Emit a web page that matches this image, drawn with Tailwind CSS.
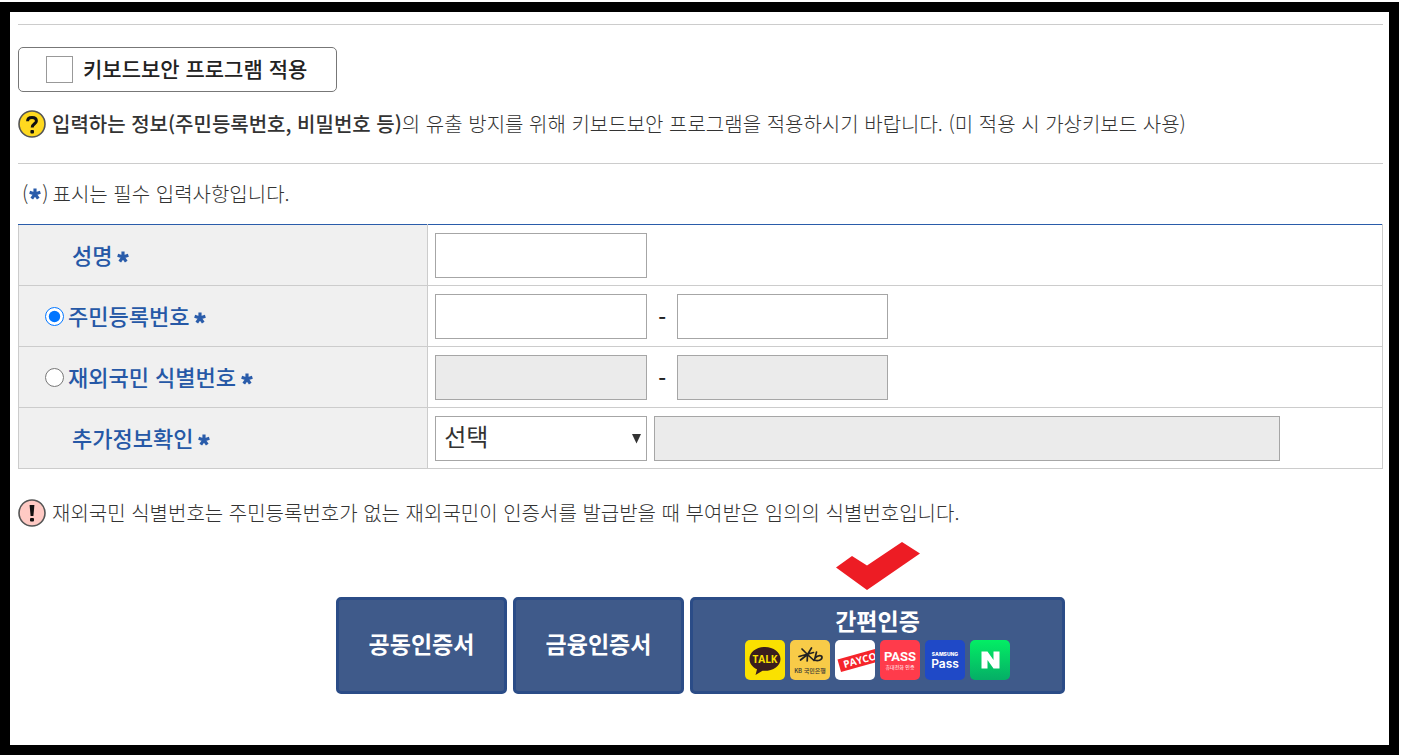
<!DOCTYPE html>
<html lang="ko">
<head>
  <meta charset="UTF-8">
  <meta name="viewport" content="width=device-width, initial-scale=1.0">
  <title>본인확인</title>
  <script src="https://cdn.jsdelivr.net/npm/@tailwindcss/browser@4"></script>
</head>
<body class="bg-white font-['Noto_Sans_CJK_KR',sans-serif] text-[#333]">
  <!-- asterisk used by every required field -->
  <svg class="hidden">
    <symbol id="required" viewBox="0 0 12 12">
      <path d="M6 6V1.2M6 6L1.4 4.6M6 6L10.6 4.6M6 6L3.2 10M6 6L8.8 10" stroke="#2a5caa" stroke-width="2.7" fill="none"/>
    </symbol>
  </svg>

  <main class="mt-0.5 mr-0.5 min-h-[calc(100vh-2px)] border-10 border-black pt-3 pr-1.5 pb-12 pl-2">
    <section class="border-y border-[#ccc] pt-[22px] pb-[23px]">
      <label class="flex h-[45px] w-[319px] items-center gap-2.5 rounded-[5px] border border-[#777] pl-[27px] text-[21px] font-medium text-[#222]">
        <input type="checkbox" class="size-[27px] appearance-none border border-[#999] bg-white checked:bg-[#2a5caa]">
        <span class="pb-0.5">키보드보안 프로그램 적용</span>
      </label>
      <p class="mt-4 flex h-8 items-center gap-1.5 text-[20px] font-light">
        <svg class="size-7 shrink-0" viewBox="0 0 28 28">
          <circle cx="14" cy="14" r="13" fill="#ffd91f" stroke="#555" stroke-width="1.6"/>
          <path d="M9.6 11.2C9.6 8.6 11.4 7.4 14 7.4S18.4 8.8 18.4 11C18.4 13.8 14.2 13.8 14.2 17.4" stroke="#111" stroke-width="3" fill="none"/>
          <rect x="12.4" y="20" width="3.6" height="3.6" rx="1" fill="#111"/>
        </svg>
        <span><strong class="font-medium">입력하는 정보(주민등록번호, 비밀번호 등)</strong>의 유출 방지를 위해 키보드보안 프로그램을 적용하시기 바랍니다. (미 적용 시 가상키보드 사용)</span>
      </p>
    </section>

    <p class="flex h-[60px] items-center pl-1 text-[20px] font-light">
      (<svg class="size-3.5"><use href="#required"/></svg>) <span class="pl-1">표시는 필수 입력사항입니다.</span>
    </p>

    <table class="w-full table-fixed border-collapse border border-t-[#2a5caa] border-[#ccc]">
      <tbody>
        <tr class="h-[61px]">
          <th scope="row" class="w-[30%] border-r border-[#ccc] bg-[#f0f0f0] pb-0.5 pl-[53px] text-left text-[22px] font-medium text-[#2658a6]">
            <label for="name" class="flex items-center gap-1">성명<svg class="mt-1.5 size-3.5"><use href="#required"/></svg></label>
          </th>
          <td class="px-[7px]">
            <input id="name" type="text" class="block h-[45px] w-[212px] border border-[#a6a6a6] px-2 text-[22px]">
          </td>
        </tr>
        <tr class="h-[61px] border-t border-[#ccc]">
          <th scope="row" class="border-r border-[#ccc] bg-[#f0f0f0] pb-0.5 pl-[26px] text-left text-[22px] font-medium text-[#2658a6]">
            <label class="flex items-center gap-1">
              <input type="radio" name="idType" class="mt-0.5 size-[19px]" checked>주민등록번호<svg class="mt-1.5 size-3.5"><use href="#required"/></svg>
            </label>
          </th>
          <td class="px-[7px]">
            <div class="flex items-center text-[22px] text-[#222]">
              <input type="text" aria-label="주민등록번호 앞자리" class="h-[45px] w-[212px] border border-[#a6a6a6] px-2">
              <span class="w-[30px] text-center font-medium">-</span>
              <input type="password" aria-label="주민등록번호 뒷자리" class="h-[45px] w-[211px] border border-[#a6a6a6] px-2">
            </div>
          </td>
        </tr>
        <tr class="h-[61px] border-t border-[#ccc]">
          <th scope="row" class="border-r border-[#ccc] bg-[#f0f0f0] pb-0.5 pl-[26px] text-left text-[22px] font-medium text-[#2658a6]">
            <label class="flex items-center gap-1">
              <input type="radio" name="idType" class="mt-0.5 size-[19px]">재외국민 식별번호<svg class="mt-1.5 size-3.5"><use href="#required"/></svg>
            </label>
          </th>
          <td class="px-[7px]">
            <div class="flex items-center text-[22px] text-[#222]">
              <input type="text" aria-label="식별번호 앞자리" class="h-[45px] w-[212px] border border-[#a6a6a6] bg-[#ebebeb] px-2" disabled>
              <span class="w-[30px] text-center font-medium">-</span>
              <input type="password" aria-label="식별번호 뒷자리" class="h-[45px] w-[211px] border border-[#a6a6a6] bg-[#ebebeb] px-2" disabled>
            </div>
          </td>
        </tr>
        <tr class="h-[61px] border-t border-[#ccc]">
          <th scope="row" class="border-r border-[#ccc] bg-[#f0f0f0] pb-0.5 pl-[53px] text-left text-[22px] font-medium text-[#2658a6]">
            <label for="extra" class="flex items-center gap-1">추가정보확인<svg class="mt-1.5 size-3.5"><use href="#required"/></svg></label>
          </th>
          <td class="px-[7px]">
            <div class="flex items-center gap-[7px]">
              <div class="relative">
                <select id="extra" class="block h-[45px] w-[212px] appearance-none border border-[#a6a6a6] bg-white px-2 pb-1 text-[24px] font-normal">
                  <option>선택</option>
                </select>
                <svg class="pointer-events-none absolute top-[18px] right-1.5 h-2.5 w-[9px]" viewBox="0 0 9 10"><path d="M0 0H9L4.5 9.5Z" fill="#333"/></svg>
              </div>
              <input type="text" aria-label="추가정보" class="h-[45px] w-[626px] border border-[#a6a6a6] bg-[#ebebeb] px-2" disabled>
            </div>
          </td>
        </tr>
      </tbody>
    </table>

    <p class="mt-7 flex h-8 items-center gap-1.5 text-[20px] font-light">
      <svg class="size-7 shrink-0" viewBox="0 0 28 28">
        <circle cx="14" cy="14" r="13" fill="#ffcac4" stroke="#555" stroke-width="1.6"/>
        <path d="M11.6 6H16.4L15.4 17H12.6Z" fill="#111"/>
        <rect x="12" y="19" width="4" height="3.6" rx="1" fill="#111"/>
      </svg>
      재외국민 식별번호는 주민등록번호가 없는 재외국민이 인증서를 발급받을 때 부여받은 임의의 식별번호입니다.
    </p>

    <div class="mt-[68px] flex justify-center gap-1.5 text-[23px] font-bold text-white">
      <button type="button" class="h-[97px] w-[171px] rounded-[5px] border-3 border-[#2b4c87] bg-[#3f5a8a] pb-1">공동인증서</button>
      <button type="button" class="h-[97px] w-[171px] rounded-[5px] border-3 border-[#2b4c87] bg-[#3f5a8a] pb-1">금융인증서</button>
      <button type="button" class="relative flex h-[97px] w-[375px] flex-col items-center rounded-[5px] border-3 border-[#2b4c87] bg-[#3f5a8a] pt-1">
        <svg class="absolute -top-[58px] left-[143px] h-12 w-[84px]" viewBox="0 0 84 48"><path d="M0 25.5L16 14L31 23.5L66 0L84 11.5L31 48Z" fill="#ed1c24"/></svg>
        <span class="pb-1 leading-8">간편인증</span>
        <span class="flex gap-[5px]">
          <!-- KakaoTalk -->
          <svg class="size-10" viewBox="0 0 40 40">
            <rect width="40" height="40" rx="5" fill="#fae100"/>
            <path d="M20 7C11.5 7 4.500 12 4.500 19C4.500 23.500 7.500 27.200 12 29.300L10.500 35L17.500 30.800C27.500 31.500 35.500 26.500 35.500 19C35.500 12 28.500 7 20 7Z" fill="#3a1d1d"/>
            <text x="20" y="22.500" text-anchor="middle" font-family="Open Sans, sans-serif" font-size="10" font-weight="700" fill="#fae100">TALK</text>
          </svg>
          <!-- KB -->
          <svg class="size-10" viewBox="0 0 40 40">
            <rect width="40" height="40" rx="5" fill="#f8cb48"/>
            <path d="M12 9L17.500 14.500M21.500 8L17.500 14.500L17.200 21M9 16.500L23.500 12.500M17.500 14.500L10.500 20M17.500 14.500L24 20.500M26.500 12L24.500 20C28 21.500 32 20 32 17.300C32 15 28 15 25.300 17.800" stroke="#222" stroke-width="1.700" stroke-linecap="round" stroke-linejoin="round" fill="none"/>
            <text x="20" y="33" text-anchor="middle" font-family="Noto Sans CJK KR, sans-serif" font-size="6" font-weight="500" fill="#333">KB 국민은행</text>
          </svg>
          <!-- PAYCO, label runs off the right edge of the tile -->
          <svg class="size-10" viewBox="0 0 40 40">
            <clipPath id="tile"><rect width="40" height="40" rx="5"/></clipPath>
            <g clip-path="url(#tile)">
              <rect width="40" height="40" fill="#fff"/>
              <path d="M2.500 19.500L42 8.500V22L6 32Z" fill="#f5252b"/>
              <text x="9.500" y="28" transform="rotate(-15 9.5 28)" font-family="Open Sans, sans-serif" font-size="10" font-weight="700" fill="#fff">PAYCO</text>
            </g>
          </svg>
          <!-- PASS -->
          <svg class="size-10" viewBox="0 0 40 40">
            <rect width="40" height="40" rx="5" fill="#ff3b4b"/>
            <text x="20" y="21" text-anchor="middle" font-family="Liberation Sans Narrow, Roboto, sans-serif" font-size="13" font-weight="700" fill="#fff">PASS</text>
            <text x="20" y="29" text-anchor="middle" font-family="Noto Sans CJK KR, sans-serif" font-size="5" font-weight="400" fill="#fff">휴대전화 인증</text>
          </svg>
          <!-- Samsung Pass -->
          <svg class="size-10" viewBox="0 0 40 40">
            <rect width="40" height="40" rx="5" fill="#1f49c7"/>
            <text x="20" y="16" text-anchor="middle" font-family="Inter, sans-serif" font-size="5" font-weight="800" fill="#fff">SAMSUNG</text>
            <text x="20" y="28" text-anchor="middle" font-family="Inter, sans-serif" font-size="12" font-weight="600" fill="#fff">Pass</text>
          </svg>
          <!-- Naver -->
          <svg class="size-10" viewBox="0 0 40 40">
            <linearGradient id="naver" x1="0" y1="0" x2="0" y2="1"><stop offset="0" stop-color="#03ee64"/><stop offset="1" stop-color="#05ae66"/></linearGradient>
            <rect width="40" height="40" rx="5" fill="url(#naver)"/>
            <path d="M11.500 11.500H17.500L23.500 20V11.500H29.500V28.500H23.500L17.500 20V28.500H11.500Z" fill="#fff"/>
          </svg>
        </span>
      </button>
    </div>
  </main>
</body>
</html>
